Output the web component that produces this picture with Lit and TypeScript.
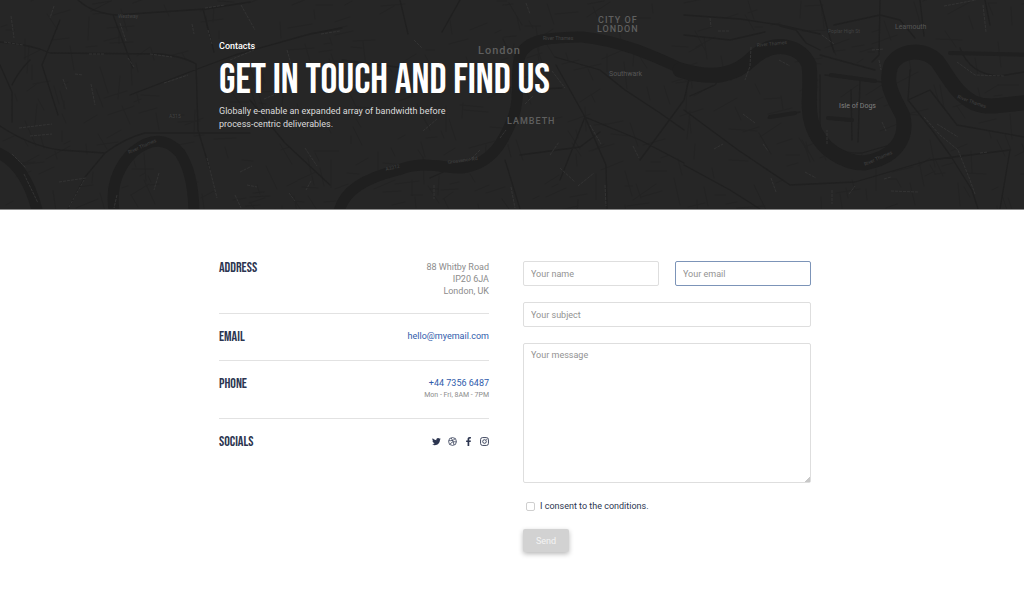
import { LitElement, html, svg, css } from "lit";
import { customElement, state } from "lit/decorators.js";

// Repeatable pseudo-random numbers for the side streets of the map.
function sequence(seed: number) {
  let s = seed;
  return () => {
    s = (s * 16807) % 2147483647;
    return s / 2147483647;
  };
}

function sideStreets() {
  const next = sequence(77);
  let path = "";
  for (let i = 0; i < 480; i++) {
    const x = Math.round(next() * 1024);
    const y = Math.round(next() * 210);
    const a = -0.25 + (next() > 0.5 ? Math.PI / 2 : 0) + (next() - 0.5) * 0.7;
    const l = 6 + next() * 22;
    path += `M${x} ${y}l${Math.round(Math.cos(a) * l)} ${Math.round(Math.sin(a) * l)}`;
  }
  return path;
}
const streets = sideStreets();

@customElement("city-map")
class CityMap extends LitElement {
  static styles = css`
    :host { display: block; }
    .map { display: block; width: 100%; height: 100%; }
    .line { fill: none; stroke-linecap: round; stroke-linejoin: round; }
    .fine { stroke: #232323; stroke-width: 1; }
    .lit { stroke: #333333; stroke-width: 1; stroke-dasharray: 3 1; stroke-linecap: butt; }
    .road { stroke: #202020; stroke-width: 1.3; }
    .river { stroke: #1f1f1f; stroke-width: 11; }
    .wide { stroke-width: 15; }
    .dock { stroke: #202020; stroke-width: 4; }
    .name { font-family: Roboto, sans-serif; fill: #5f5f5f; }
    .city { font-size: 11px; letter-spacing: 1px; font-weight: 500; }
    .area { font-size: 9px; letter-spacing: 1px; font-weight: 500; }
    .spot { font-size: 7px; fill: #565656; }
    .bright { fill: #808080; }
    .tiny { font-size: 5px; fill: #424242; }
  `;
  render() {
    return html`<svg class="map" viewBox="0 0 1024 209" preserveAspectRatio="xMidYMid slice" aria-hidden="true">
      <path class="line fine" d=${streets} />
      <path class="line road" d="M78 0Q92 13 116 15L205 9L250 2M0 42Q30 44 50 53L160 54Q185 57 196 64M0 126Q30 146 60 150L105 153Q125 138 145 133L250 133M113 15L133 68M203 9L214 52M30 60Q18 72 12 85M130 95L200 68L235 55L310 34L342 28M196 64L198 130L210 170M250 100L285 143L330 185M105 153L85 177L68 209M342 60L372 64L405 68M400 0L408 34M520 155L580 147L600 132M585 117L640 140L684 163M585 117L606 165L607 209M520 90L562 88M555 57L600 70L625 90L660 113L684 130M640 160L684 100L690 75M556 65L585 117L560 180M684 15L740 19L780 25L820 34M684 35L730 40L765 32M780 26L796 30L806 43L820 50M820 0L828 31L834 52M834 25L880 15L900 20L915 38M880 0L879 55L872 62M820 55L875 70M825 75L882 82M820 75L820 130Q835 155 862 153L890 145M830 119L852 121M851 90L852 140M860 80L858 142M910 70L908 100L932 130L950 155L972 190L978 209M908 100L930 90L957 125L1024 137M960 48Q970 75 1000 76L1024 72M684 110L738 150L790 185L855 182L930 160L1010 150M724 72L715 85L690 96M800 112L768 118M684 165L730 190L760 209M0 65L12 92L12 122M60 20L42 65L58 115M505 160L520 209M430 178L470 160M460 0L442 32M920 0L924 36M985 0L990 25M1010 150L1000 209" />
      <path class="line river" d="M-6 151Q26 163 38 214M115 216Q107 178 133 152Q160 130 180 153Q194 174 194 216" />
      <path class="line river" d="M338 216C342 190 366 178 398 170C425 160 440 168 462 168C493 164 504 140 513 118C522 92 514 74 520 56C527 38 550 38 582 37C620 41 650 54 684 70" />
      <path class="line river wide" d="M680 70C713 80 735 76 753 58C776 38 802 47 809 65C812 88 806 105 812 124C820 150 845 163 864 163C894 158 908 140 903 116C894 98 884 85 891 65C901 49 924 48 937 61C948 76 956 94 974 103C991 110 1008 103 1034 102" />
      <path class="line dock" d="M950 53L1034 55M770 117L795 113M831 75L875 81M828 118L852 120" />
      <path class="line lit" d="M11 16L14 38M4 42L23 45M54 6L50 18M120 23L126 41M128 58L134 67M89 54L105 54M150 54L172 57M63 79L67 90M91 84L95 105M75 74L83 75M164 83L188 75M19 128L52 124M30 136L52 134M59 182L86 178M84 180L69 207M159 173L154 190M117 195L114 208M207 158L217 198M235 195L241 208M192 24L194 34M208 30L212 44M205 8L225 5M241 5L255 30M287 50L291 64M230 60L254 50M264 99L278 93M240 172L252 166M247 185L257 187M289 193L295 201M311 181L306 190M305 148L317 166M321 34L340 31M12 154L26 168M24 174L38 203M423 131L437 119M526 3L530 14M552 71L565 88M590 125L601 144M605 185L606 206M633 146L639 158M560 168L575 182M578 186L594 173M511 187L515 208M550 155L559 142M525 104L533 96M480 150L470 160M500 138L506 130M434 185L434 199M414 40L422 48M751 47L750 66L745 80M710 18L711 27M718 31L730 31M779 60L790 66M743 114L755 123M714 149L723 144M771 178L776 192M763 144L768 151M805 172L816 178M827 144L827 130M849 194L855 186M832 190L832 204M879 60L881 70M884 179L891 177M891 191L918 192M983 5L986 32M944 6L976 0M957 62L975 75L1004 76M924 117L940 135L958 150L970 180L975 194M937 124L958 137M980 153L988 152M882 122L886 131M822 35L834 44M872 50L884 49" />
      <g>
        <text class="name city" x="478" y="54">London</text>
        <text class="name area" x="598" y="23">CITY OF</text>
        <text class="name area" x="597" y="32">LONDON</text>
        <text class="name area" x="507" y="124">LAMBETH</text>
        <text class="name spot" x="609" y="76">Southwark</text>
        <text class="name spot" x="895" y="29">Leamouth</text>
        <text class="name spot bright" x="839" y="108">Isle of Dogs</text>
        <text class="name tiny" x="543" y="40">River Thames</text>
        <text class="name tiny" x="386" y="171" transform="rotate(-14 386 171)">A3212</text>
        <text class="name tiny" x="448" y="164" transform="rotate(-8 448 164)">Grosvenor Rd</text>
        <text class="name tiny" x="129" y="154" transform="rotate(-24 129 154)">River Thames</text>
        <text class="name tiny" x="757" y="47" transform="rotate(-6 757 47)">River Thames</text>
        <text class="name tiny" x="865" y="166" transform="rotate(-24 865 166)">River Thames</text>
        <text class="name tiny" x="957" y="98" transform="rotate(20 957 98)">River Thames</text>
        <text class="name tiny" x="828" y="33">Poplar High St</text>
        <text class="name tiny" x="118" y="18">Westway</text>
        <text class="name tiny" x="169" y="118">A315</text>
      </g>
    </svg>`;
  }
}

const icons = {
  Twitter: svg`<path d="M23.6 4.9a9.6 9.6 0 0 1-2.8.8 4.9 4.9 0 0 0 2.1-2.7 9.7 9.7 0 0 1-3.1 1.2 4.8 4.8 0 0 0-8.3 4.4A13.8 13.8 0 0 1 1.6 3.5a4.8 4.8 0 0 0 1.5 6.5 4.8 4.8 0 0 1-2.2-.6v.1a4.8 4.8 0 0 0 3.9 4.7 4.9 4.9 0 0 1-2.2.1 4.8 4.8 0 0 0 4.5 3.4A9.7 9.7 0 0 1 0 19.7a13.7 13.7 0 0 0 7.4 2.2c8.9 0 13.8-7.4 13.8-13.8v-.6a9.8 9.8 0 0 0 2.4-2.6z" />`,
  Dribbble: svg`<g fill="none" stroke="currentColor" stroke-width="2"><circle cx="12" cy="12" r="10.5" /><path d="M8 2.5c4 5 6.5 11 8 18.5M2 10c7 0 13-.8 17-5.5M5 20c3.5-6.5 9.5-8.5 17.5-7" /></g>`,
  Facebook: svg`<path d="M14 24V13.3h3.800l.6-4.300H14V6.300c0-1.300.5-2 2.100-2h2.500V.4C18.100.2 16.700 0 15.200 0 11.700 0 9.500 2.100 9.500 5.800V9H5.700v4.300h3.800V24z" />`,
  Instagram: svg`<rect x="1.5" y="1.5" width="21" height="21" rx="5.5" fill="none" stroke="currentColor" stroke-width="2.4" /><circle cx="12" cy="12" r="4.8" fill="none" stroke="currentColor" stroke-width="2.4" /><circle cx="18" cy="6" r="1.5" />`,
};

@customElement("contact-details")
class ContactDetails extends LitElement {
  static styles = css`
    :host { display: block; }
    .row { display: flex; justify-content: space-between; padding: 16px 0; border-bottom: 1px solid #e2e2e2; }
    .row:first-child { padding-top: 0; }
    .row:last-child { border-bottom: 0; }
    .title { margin: 0; font: 400 14px/14px "Bebas Neue", "Roboto Condensed", sans-serif; text-transform: uppercase; color: #2c3550; }
    .value { text-align: right; line-height: 12px; color: #8c8c8c; font-style: normal; }
    .link { color: #2f5bab; text-decoration: none; }
    .hours { font-size: 7px; line-height: 13px; }
    .socials { display: flex; gap: 7px; align-items: center; height: 12px; }
    .social { display: flex; color: #2c3550; }
    .icon { width: 9px; height: 9px; fill: currentColor; overflow: visible; }
  `;
  render() {
    return html`
      <section class="row">
        <h2 class="title">Address</h2>
        <address class="value">88 Whitby Road<br />IP20 6JA<br />London, UK</address>
      </section>
      <section class="row">
        <h2 class="title">Email</h2>
        <div class="value"><a class="link" href="mailto:hello@myemail.com">hello@myemail.com</a></div>
      </section>
      <section class="row">
        <h2 class="title">Phone</h2>
        <div class="value">
          <a class="link" href="tel:+4473566487">+44 7356 6487</a>
          <div class="hours">Mon - Fri, 8AM - 7PM</div>
        </div>
      </section>
      <section class="row">
        <h2 class="title">Socials</h2>
        <div class="socials">
          ${Object.entries(icons).map(([name, shape]) => html`<a class="social" href="#" aria-label=${name}><svg class="icon" viewBox="0 0 24 24">${shape}</svg></a>`)}
        </div>
      </section>
    `;
  }
}

@customElement("contact-form")
class ContactForm extends LitElement {
  static styles = css`
    :host { display: block; }
    .form { display: grid; grid-template-columns: 1fr 1fr; gap: 16px; }
    .field {
      box-sizing: border-box; width: 100%; min-width: 0; height: 25px; margin: 0; padding: 0 7px;
      border: 1px solid #dedede; border-radius: 2px; outline: 0; background: #fff;
      font: 9px/12px Roboto, sans-serif; color: #2c3550;
    }
    .field::placeholder { color: #929292; opacity: 1; }
    .active { border-color: #7c94b8; }
    .full { grid-column: 1 / -1; }
    .message { display: block; height: 140px; padding: 5px 7px; resize: vertical; }
    .message::-webkit-resizer { background: linear-gradient(135deg, transparent 80%, #c8c8c8 80%); }
    .consent { display: flex; align-items: center; gap: 5px; padding-left: 3px; line-height: 14px; color: #2c3550; }
    .tick { appearance: none; width: 9px; height: 9px; margin: 0; border: 1px solid #cfcfcf; border-radius: 2px; background: #fff; }
    .tick:checked { background: #2f5bab; }
    .send {
      justify-self: start; height: 23px; padding: 0 13px; border: 0; border-radius: 2px;
      background: #d2d2d2; color: #f4f4f4; font: 9px/12px Roboto, sans-serif;
      box-shadow: 0 2px 5px rgba(0, 0, 0, 0.28);
    }
  `;
  @state() agreed = false;
  render() {
    return html`
      <form class="form" @submit=${(e: Event) => e.preventDefault()}>
        <input class="field" type="text" placeholder="Your name" aria-label="Your name" />
        <input class="field active" type="email" placeholder="Your email" aria-label="Your email" />
        <input class="field full" type="text" placeholder="Your subject" aria-label="Your subject" />
        <textarea class="field full message" placeholder="Your message" aria-label="Your message"></textarea>
        <label class="consent full">
          <input class="tick" type="checkbox" .checked=${this.agreed} @change=${() => (this.agreed = !this.agreed)} />
          I consent to the conditions.
        </label>
        <button class="send" ?disabled=${!this.agreed}>Send</button>
      </form>
    `;
  }
}

@customElement("app-root")
class AppRoot extends LitElement {
  static styles = css`
    :host { display: block; min-height: 100vh; background: #fff; font: 9px/13px Roboto, sans-serif; }
    .hero { display: grid; background: #262626; color: #fff; border-bottom: 1px solid #8a8a8a; }
    .map, .intro { grid-area: 1 / 1; }
    .map { min-height: 0; height: 209px; }
    .wrap { box-sizing: border-box; width: 100%; max-width: 598px; margin: 0 auto; padding-left: 6px; }
    .intro { position: relative; padding-top: 40px; padding-bottom: 77px; }
    .crumb { margin: 0; font-weight: 500; }
    .heading { margin: 12px 0 8px; font: 400 42px/32px "Bebas Neue", "Roboto Condensed", sans-serif; text-transform: uppercase; }
    .lead { margin: 0; max-width: 230px; color: #dcdcdc; }
    .columns { display: grid; grid-template-columns: 270fr 288fr; gap: 34px; padding-top: 51px; padding-bottom: 40px; }
  `;
  render() {
    return html`
      <header class="hero">
        <city-map class="map"></city-map>
        <div class="wrap intro">
          <p class="crumb">Contacts</p>
          <h1 class="heading">Get in touch and find us</h1>
          <p class="lead">Globally e-enable an expanded array of bandwidth before process-centric deliverables.</p>
        </div>
      </header>
      <main class="wrap columns">
        <contact-details></contact-details>
        <contact-form></contact-form>
      </main>
    `;
  }
}
